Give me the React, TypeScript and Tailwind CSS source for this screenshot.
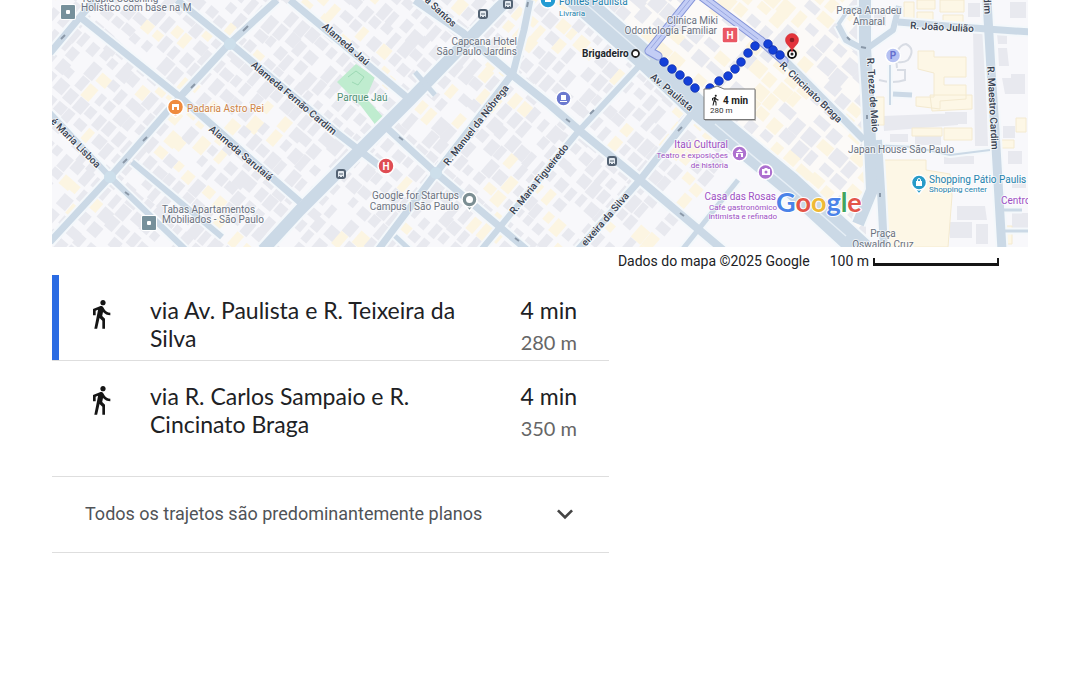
import React from 'react';

const WALK =
  'M13.5 5.5c1.1 0 2-.9 2-2s-.9-2-2-2-2 .9-2 2 .9 2 2 2zM9.8 8.9L7 23h2.1l1.8-8 2.1 2v6h2v-7.5l-2.1-2 .6-3C14.8 12 16.8 13 19 13v-2c-1.9 0-3.5-1-4.3-2.4l-1-1.6c-.4-.6-1-1-1.7-1-.3 0-.5.1-.8.1L6 8.3V13h2V9.6l1.8-.7z';

const noise = (n: number) => {
  const v = Math.sin(n * 127.1 + 11.7) * 43758.5453;
  return v - Math.floor(v);
};

type Block = { x: number; y: number; w: number; h: number; fill: string };

/* Rows of building footprints on a local grid. */
function makeBlocks(x0: number, y0: number, x1: number, y1: number, dx: number, dy: number, warm: number): Block[] {
  const out: Block[] = [];
  let i = Math.round(x0 + 31);
  for (let y = y0; y < y1; y += dy) {
    for (let x = x0; x < x1; x += dx) {
      i += 1;
      if (noise(i + 900) < 0.08) continue;
      out.push({
        x: x + noise(i) * 3,
        y: y + noise(i + 300) * 4,
        w: dx * (0.55 + noise(i + 50) * 0.42),
        h: dy * (0.5 + noise(i + 70) * 0.48),
        fill: noise(Math.floor(x / 45) * 13 + Math.floor(y / 38) * 7) * 0.6 + noise(i + 5) * 0.4 < warm ? '#fcf5e2' : '#e8e9ef',
      });
    }
  }
  return out;
}

const WEST = makeBlocks(-60, -560, 660, 210, 13, 17, 0.3);
const CENTER = makeBlocks(400, -660, 900, 10, 17, 16, 0.52);

const EAST_GRAY =
  'M883 116 L958 113 V125 L884 131z M973 28 h11 l4 118 h-13z M998 48 h9 l2 18 h-10z M1002 78 h9 v-4 h14 v20 h-20z M997 34 h10 v10 h-9z M1003 126 h12 v12 h-12z M1008 151 h14 v13 h-14z M1012 213 h16 v18 h-16z M957 206 h28 l2 14 h-30z M948 222 h24 v16 h-22z M976 224 h12 v20 h-12z M915 136 h26 v9 h-26z M890 134 h18 v8 h-18z M944 156 h30 v8 h-30z M945 112 h22 v12 h-22z M968 3 h12 v14 h-12z M1010 2 h16 v16 h-16z M874 12 h12 v14 h-12z M1012 178 h14 v10 h-14z';
const EAST_YELLOW =
  'M904 2 h10 v18 h-10z M917 0 h18 v9 h-18z M917 12 h16 v8 h-16z M940 0 h24 v12 h-24z M943 15 h20 v8 h-20z M918 51 h16 v6 h32 v20 h-22 v8 h22 v14 l-26 2 v8 l-24 -3 v-9 h18 v-24 l-16 -4z M930 95 h42 v14 l-40 2z M912 128 h30 v8 h-30z M944 128 h28 v12 h-28z M876 97 h8 v28 h-8z M1016 118 h10 v14 h-10z M1000 140 h14 v8 h-14z M1004 226 h8 v18 h-8z M884 160 L926 160 V170 L950 174 L952 196 L948 247 H888z';

const ROADS: [string, number][] = [
  ['M50 53 L80 17 L95 0', 7],
  ['M80 17 L180 97 L203 117 L277 182 L300 202', 7],
  ['M177 0 L230 43 L337 133 L385 170', 7],
  ['M277 0 L230 43 L180 97 L110 177 L50 242', 7],
  ['M50 113 L110 177 L186 250', 6],
  ['M132 162 L222 237', 6],
  ['M263 250 L300 210 L357 153 L410 100 L500 7 L508 0', 12],
  ['M290 0 L410 100', 7],
  ['M415 0 L463 33 L510 73 L550 105 L580 131 L640 180 L723 250', 8],
  ['M530 0 L524 30 L513 73 L436 173 L378 250', 7],
  ['M387 128 L436 173 L500 227 L527 250', 7],
  ['M395 236 L410 250', 5],
  ['M640 65 L577 133 L500 227 L481 250', 6],
  ['M692 114 L640 180 L578 250', 7],
  ['M738 180 L682 250', 5],
  ['M415 72 L435 95', 5],
  ['M570 -8 L647 60 L700 110 L790 184 L862 250', 24],
  ['M783 58 L864 140', 7],
  ['M865 0 L865 48 L868 95 L872 190 L858 224', 12],
  ['M878 140 L881 190 L884 250', 8],
  ['M838 25 L846 40 L865 50 L893 30 L899 6', 6],
  ['M838 25 L848 10 L866 8', 4],
  ['M898 22 L960 27 L1030 32', 7],
  ['M987 0 L991 70 L995 130 L1002 250', 9],
  ['M890 105 L890 65', 2],
  ['M893 94 L912 95', 5],
  ['M872 145 L914 147 L950 155 L990 150', 2],
  ['M1002 210 L1022 210 M1002 231 L1028 231', 3],
];

type Label = { t: string; x: number; y: number; a: number; anchor?: 'start' | 'end' | 'middle' };
const STREETS: Label[] = [
  { t: 'Alameda Jaú', x: 346, y: 44, a: 41 },
  { t: 'Alameda Fernão Cardim', x: 294, y: 98, a: 40 },
  { t: 'Alameda Sarutaiá', x: 241, y: 153, a: 40 },
  { t: 'é Maria Lisboa', x: 99, y: 166, a: 45, anchor: 'end' },
  { t: 'a Santos', x: 455, y: 25, a: 43, anchor: 'end' },
  { t: 'R. Manuel da Nóbrega', x: 476, y: 125, a: -52 },
  { t: 'R. Maria Figueiredo', x: 539, y: 179, a: -51 },
  { t: 'eixeira da Silva', x: 627, y: 194, a: -49, anchor: 'end' },
  { t: 'Av. Paulista', x: 672, y: 92, a: 40 },
  { t: 'R. Cincinato Braga', x: 811, y: 92, a: 44 },
  { t: 'R. Treze de Maio', x: 873, y: 95, a: 86 },
  { t: 'R. Maestro Cardim', x: 993, y: 108, a: 87 },
  { t: 'dim', x: 988, y: 14, a: 87, anchor: 'end' },
  { t: 'R. João Julião', x: 942, y: 27, a: 3 },
];

const GRAY = '#6b7280';
const PURPLE = '#9c4fc4';
const BLUE = '#2482ad';
type Poi = { t: string; x: number; y: number; c: string; s?: number; anchor?: 'start' | 'end' | 'middle' };
const POIS: Poi[] = [
  { t: 'Terapia Coaching', x: 81, y: 2, c: GRAY },
  { t: 'Holístico com base na M', x: 81, y: 11, c: GRAY },
  { t: 'Padaria Astro Rei', x: 187, y: 112, c: '#cf8547' },
  { t: 'Tabas Apartamentos', x: 162, y: 213, c: GRAY },
  { t: 'Mobiliados - São Paulo', x: 162, y: 223, c: GRAY },
  { t: 'Parque Jaú', x: 337, y: 101, c: '#4f8f75' },
  { t: 'Capcana Hotel', x: 517, y: 45, c: GRAY, anchor: 'end' },
  { t: 'São Paulo Jardins', x: 517, y: 55, c: GRAY, anchor: 'end' },
  { t: 'Google for Startups', x: 459, y: 199, c: GRAY, anchor: 'end' },
  { t: 'Campus | São Paulo', x: 459, y: 210, c: GRAY, anchor: 'end' },
  { t: 'Fontes Paulista', x: 559, y: 5, c: BLUE },
  { t: 'Livraria', x: 559, y: 16, c: BLUE, s: 8 },
  { t: 'Clínica Miki', x: 718, y: 24, c: GRAY, anchor: 'end' },
  { t: 'Odontologia Familiar', x: 717, y: 34, c: GRAY, anchor: 'end' },
  { t: 'Itaú Cultural', x: 728, y: 148, c: PURPLE, anchor: 'end' },
  { t: 'Teatro e exposições', x: 728, y: 158, c: PURPLE, s: 8, anchor: 'end' },
  { t: 'de história', x: 728, y: 168, c: PURPLE, s: 8, anchor: 'end' },
  { t: 'Casa das Rosas', x: 776, y: 200, c: PURPLE, anchor: 'end' },
  { t: 'Café gastronômico', x: 777, y: 210, c: PURPLE, s: 8, anchor: 'end' },
  { t: 'intimista e refinado', x: 777, y: 219, c: PURPLE, s: 8, anchor: 'end' },
  { t: 'Praça Amadeu', x: 869, y: 14, c: GRAY, anchor: 'middle' },
  { t: 'Amaral', x: 869, y: 25, c: GRAY, anchor: 'middle' },
  { t: 'Japan House São Paulo', x: 848, y: 153, c: GRAY },
  { t: 'Shopping Pátio Paulis', x: 929, y: 183, c: BLUE },
  { t: 'Shopping center', x: 929, y: 192, c: BLUE, s: 8 },
  { t: 'Centro', x: 1001, y: 204, c: PURPLE },
  { t: 'Praça', x: 883, y: 237, c: GRAY, anchor: 'middle' },
  { t: 'Oswaldo Cruz', x: 883, y: 248, c: GRAY, anchor: 'middle' },
];

const DOTS = [
  [664, 62], [672, 69], [680, 75], [688, 81], [695, 88], [710, 88], [719, 81], [728, 76],
  [735, 69], [741, 62], [748, 53], [755, 46], [768, 44], [773, 50], [780, 55],
];

const STOPS = [[483, 14], [508, 4], [341, 174], [612, 161]];

function Blocks({ items }: { items: Block[] }) {
  return (
    <>
      {items.map((b, i) => (
        <rect key={i} x={b.x} y={b.y} width={b.w} height={b.h} fill={b.fill} />
      ))}
    </>
  );
}

function RouteMap() {
  return (
    <svg
      viewBox="52 0 976 247"
      preserveAspectRatio="xMidYMid slice"
      className="block w-full h-[247px] font-['Roboto',sans-serif]"
      role="img"
      aria-label="Mapa do trajeto"
    >
      <defs>
        <clipPath id="west"><path d="M52 0 H560 L850 250 H52z" /></clipPath>
        <clipPath id="center"><path d="M560 0 H866 V250 H850z" /></clipPath>
      </defs>
      <rect x="52" width="977" height="247" fill="#f8f8fb" />
      <path d="M560 0 H866 V250 H850z" fill="#fcfaf8" />
      <g clipPath="url(#west)"><g transform="rotate(41 52 0)"><Blocks items={WEST} /></g></g>
      <g clipPath="url(#center)"><g transform="rotate(41 52 0)"><Blocks items={CENTER} /></g></g>
      <path d={EAST_GRAY} fill="#e8e9ef" />
      <path d={EAST_YELLOW} fill="#fdf7e6" stroke="#f4ead0" />

      <path d="M337 82 L356 64 L375 77 L366 98 L383 117 L377 127 L361 106z" fill="#bfeccf" />
      <path d="M348 77 l8 -6 8 6 -6 8 -6 -3" fill="none" stroke="#9cd9b4" />
      <path d="M897 68 q-3 -22 9 -24 q10 5 2 16 q-4 3 -10 2 M879 80 q14 4 26 0 v-10 h-8" fill="none" stroke="#d8dce4" strokeWidth="2" />

      <g fill="none" strokeLinejoin="round">
        {ROADS.map(([d, w]) => <path key={d} d={d} stroke="#f4f8fb" strokeWidth={w + 4} />)}
        {ROADS.map(([d, w]) => <path key={d} d={d} stroke="#cbd9e6" strokeWidth={w} />)}
        <path d="M585 3 L650 60 M715 124 L790 187 L846 236" stroke="#e6eef5" strokeWidth="1.5" />
      </g>
      <g fill="#cddfeb">
        <circle cx="230" cy="44" r="6" /><circle cx="110" cy="177" r="6" /><circle cx="436" cy="173" r="6" />
      </g>
      <g fill="none" stroke="#8a98a8" strokeWidth="2">
        <path d="M61 39 l4 -4 M243 31 l5 -5 M191 88 l4 -4 M143 141 l4 -4 M123 163 l4 -4 M125 192 l4 3 M399 137 l4 3 M515 238 l4 3 M566 119 l4 3 M590 114 l4 -4 M678 131 l4 -4 M680 213 l4 3 M527 7 l1 -5 M867 119 v-4 M880 197 v-4 M847 37 l3 3 M861 47 l5 1" />
      </g>

      <g fill="none" strokeLinejoin="round" strokeLinecap="round">
        <path d="M693 -4 L649 51 L658 56 M701 -4 L760 40 L784 61" stroke="#8494d8" strokeWidth="9" />
        <path d="M693 -4 L649 51 L658 56 M701 -4 L760 40 L784 61" stroke="#c3cdf5" strokeWidth="7" />
        <path d="M693 -4 L651 48 M701 -4 L758 39" stroke="#9aa8e2" strokeWidth="1" />
      </g>

      <g className="font-medium text-[10px]" fill="#384150" stroke="#fff" strokeWidth="2" strokeOpacity="0.6" paintOrder="stroke" strokeLinejoin="round">
        {STREETS.map((s, i) => (
          <text key={i} transform={`translate(${s.x} ${s.y}) rotate(${s.a})`} textAnchor={s.anchor ?? 'middle'} dominantBaseline="central">
            {s.t}
          </text>
        ))}
      </g>
      <g stroke="#fff" strokeWidth="2" strokeOpacity="0.6" paintOrder="stroke" strokeLinejoin="round">
        {POIS.map((p, i) => (
          <text key={i} x={p.x} y={p.y} fill={p.c} fontSize={p.s ?? 10} textAnchor={p.anchor ?? 'start'}>
            {p.t}
          </text>
        ))}
        <text x="582" y="57" fill="#22262c" className="text-[10px] font-bold">Brigadeiro</text>
      </g>

      {STOPS.map(([x, y]) => (
        <g key={x} transform={`translate(${x} ${y})`}>
          <rect x="-5" y="-5" width="10" height="10" rx="3" fill="#536273" />
          <rect x="-3" y="-3" width="6" height="6" rx="1" fill="#e3e9ef" />
          <path d="M-2 0 h4 M-2 2.5 h1 M1 2.5 h1" stroke="#536273" />
        </g>
      ))}
      {[[68, 12], [149, 223]].map(([x, y]) => (
        <g key={x}>
          <rect x={x - 8} y={y - 8} width="16" height="16" rx="2" fill="#fff" />
          <rect x={x - 7} y={y - 7} width="14" height="14" rx="1" fill="#76909b" />
          <rect x={x - 2} y={y - 2} width="4" height="4" rx="1" fill="#fff" />
        </g>
      ))}
      <g stroke="#fff" strokeWidth="1.5">
        <path d="M170 113 L175.5 117 L181 113" fill="#ef8b3e" />
        <circle cx="175.5" cy="107" r="8" fill="#ef8b3e" />
        <circle cx="386" cy="166" r="8" fill="#df4c53" />
        <circle cx="563.5" cy="98.5" r="7.5" fill="#6b79cf" />
        <circle cx="548" cy="0" r="8" fill="#239bd3" />
        <circle cx="739.5" cy="153.5" r="7.5" fill="#ad70cf" />
        <circle cx="765.5" cy="172" r="7.5" fill="#ad70cf" />
        <circle cx="893" cy="55.5" r="7.5" fill="#b5c1f3" />
        <path d="M914 188 L919 194 L924 188" fill="#279bc8" />
        <circle cx="919" cy="182.5" r="7.5" fill="#279bc8" />
        <path d="M465 205 L469.5 211 L474 205" fill="#7b8e93" />
        <circle cx="469.5" cy="199.5" r="7.5" fill="#7b8e93" />
        <rect x="722" y="27" width="16" height="16" rx="2" fill="#ea5864" />
      </g>
      <g fill="#fff">
        <path d="M172 104 h7 v6 h-2 v-3 h-3 v3 h-2z" />
        <circle cx="469.5" cy="199.5" r="3.5" />
        <path d="M561 95 h5 v5 h-5z M560 101 h7 v1 h-7z" />
        <path d="M545 0 h6 v2 h-6z" />
        <path d="M736 152 l3.5 -3 3.5 3z M736 153 h7 v4 h-7z" />
        <path d="M762 169 h2 l1 -1 h2 l1 1 h2 v6 h-8z" />
        <path d="M916 181 h6 v5 h-6z" />
        <path d="M917.5 181 v-1 a1.5 1.5 0 0 1 3 0 v1" fill="none" stroke="#fff" />
      </g>
      <circle cx="766" cy="172" r="1.5" fill="#ad70cf" />
      <path d="M738 157 v-2 a1.5 1.5 0 0 1 3 0 v2" fill="#ad70cf" />
      <g className="text-[10px] font-bold" textAnchor="middle">
        <text x="386" y="170" fill="#fff">H</text>
        <text x="730" y="39" fill="#fff">H</text>
        <text x="893" y="59" fill="#6570cf">P</text>
      </g>

      <g fill="#1440d8" stroke="#0b2aa6" strokeWidth="0.7">
        {DOTS.map(([x, y]) => <circle key={x} cx={x} cy={y} r="4.3" />)}
      </g>
      <circle cx="635.5" cy="53.5" r="3.5" fill="#fff" stroke="#222" strokeWidth="1.8" />
      <circle cx="792" cy="54" r="4" fill="#fff" stroke="#111" strokeWidth="1.8" />
      <circle cx="792" cy="54" r="1.5" fill="#222" />
      <path d="M792 52 C791 46 785.5 45 785.5 40 a6.5 6.5 0 0 1 13 0 C798.5 45 793 46 792 52z" fill="#e3343b" stroke="#c9252d" strokeWidth="0.5" />
      <circle cx="792" cy="40" r="2.3" fill="#8d1d23" />

      <g>
        <rect x="705" y="90" width="51" height="31" fill="#777" opacity="0.4" />
        <path d="M704 89 H710 L717 86 L724 89 H755 V119.5 H704z" fill="#fff" stroke="#777" />
        <path d={WALK} transform="translate(709 94) scale(.5)" fill="#222" />
        <text x="723" y="104" fill="#222" className="text-[10px] font-bold">4 min</text>
        <text x="710" y="113" fill="#333" className="text-[8px]">280 m</text>
      </g>

      <text x="776" y="212" className="text-[27px] font-bold font-['Lato',sans-serif]" stroke="#fff" strokeWidth="2" paintOrder="stroke">
        <tspan fill="#4a83e8">G</tspan><tspan fill="#e35448">o</tspan><tspan fill="#efb936">o</tspan><tspan fill="#4a83e8">g</tspan><tspan fill="#42a45c">l</tspan><tspan fill="#e35448">e</tspan>
      </text>
    </svg>
  );
}

function Route({ name, time, distance, selected }: { name: string; time: string; distance: string; selected?: boolean }) {
  return (
    <li className={selected ? 'border-b border-[#dedede]' : 'border-b border-[#dedede] pb-[30px]'}>
      <button
        type="button"
        aria-pressed={!!selected}
        className={`flex w-full items-start border-l-[7px] pl-[26px] pr-8 pt-[21px] pb-1 text-left ${selected ? 'border-[#2a6be3]' : 'border-transparent'}`}
      >
        <svg viewBox="0 0 24 24" className="mt-0.5 size-8 shrink-0" fill="#151515" aria-hidden="true"><path d={WALK} /></svg>
        <span className="ml-[33px] min-w-0 flex-1 text-[23px] leading-7 text-[#202124]">{name}</span>
        <span className="ml-10 flex shrink-0 flex-col items-end">
          <span className="text-[23px] leading-7 text-[#202124]">{time}</span>
          <span className="mt-1 text-xl leading-7 text-[#666]">{distance}</span>
        </span>
      </button>
    </li>
  );
}

export default function App() {
  return (
    <main className="min-h-screen bg-white px-[52px] font-['Roboto',sans-serif] text-[#202124]">
      <RouteMap />
      <div className="flex h-7 items-center justify-end gap-5 pr-[29px] text-sm">
        <span>Dados do mapa ©2025 Google</span>
        <span className="flex items-center gap-1">
          100 m
          <span className="mt-0.5 h-2 w-[126px] border-x-2 border-b-[3px] border-[#151515]" />
        </span>
      </div>
      <section className="max-w-[557px]" aria-label="Trajetos">
        <ul className="font-['Lato',sans-serif]">
          <Route name="via Av. Paulista e R. Teixeira da Silva" time="4 min" distance="280 m" selected />
          <Route name="via R. Carlos Sampaio e R. Cincinato Braga" time="4 min" distance="350 m" />
        </ul>
        <button
          type="button"
          aria-expanded="false"
          className="flex w-full items-center justify-between border-b border-[#dedede] pt-[21px] pb-[22px] pl-[33px] pr-7 text-left text-lg text-[#505357]"
        >
          Todos os trajetos são predominantemente planos
          <svg viewBox="0 0 24 24" className="size-8" fill="#444" aria-hidden="true">
            <path d="M16.590 8.590 12 13.170 7.410 8.590 6 10l6 6 6-6z" />
          </svg>
        </button>
      </section>
    </main>
  );
}
